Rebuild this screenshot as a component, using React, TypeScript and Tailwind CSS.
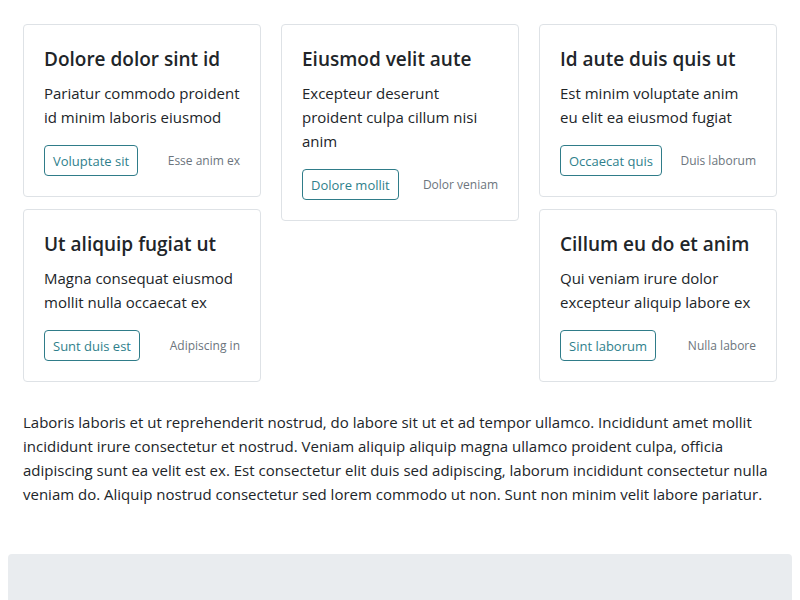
const cards = {
  left: [
    {
      title: 'Dolore dolor sint id',
      body: ['Pariatur commodo proident', 'id minim laboris eiusmod'],
      action: 'Voluptate sit',
      note: 'Esse anim ex',
    },
    {
      title: 'Ut aliquip fugiat ut',
      body: ['Magna consequat eiusmod', 'mollit nulla occaecat ex'],
      action: 'Sunt duis est',
      note: 'Adipiscing in',
    },
  ],
  middle: [
    {
      title: 'Eiusmod velit aute',
      body: ['Excepteur deserunt', 'proident culpa cillum nisi', 'anim'],
      action: 'Dolore mollit',
      note: 'Dolor veniam',
    },
  ],
  right: [
    {
      title: 'Id aute duis quis ut',
      body: ['Est minim voluptate anim', 'eu elit ea eiusmod fugiat'],
      action: 'Occaecat quis',
      note: 'Duis laborum',
    },
    {
      title: 'Cillum eu do et anim',
      body: ['Qui veniam irure dolor', 'excepteur aliquip labore ex'],
      action: 'Sint laborum',
      note: 'Nulla labore',
    },
  ],
};

const paragraph = [
  'Laboris laboris et ut reprehenderit nostrud, do labore sit ut et ad tempor ullamco. Incididunt amet mollit',
  'incididunt irure consectetur et nostrud. Veniam aliquip aliquip magna ullamco proident culpa, officia',
  'adipiscing sunt ea velit est ex. Est consectetur elit duis sed adipiscing, laborum incididunt consectetur nulla',
  'veniam do. Aliquip nostrud consectetur sed lorem commodo ut non. Sunt non minim velit labore pariatur.',
];

type Card = { title: string; body: string[]; action: string; note: string };

function InfoCard({ card }: { card: Card }) {
  return (
    <div className="mb-3 rounded-[4px] border border-[#dee2e6] bg-white p-5">
      <h5 className="mb-2 whitespace-nowrap text-[19px] font-semibold leading-7 text-[#212529]">{card.title}</h5>
      <p className="mb-4 text-[15px] leading-6 text-[#212529]">
        {card.body.map((line) => (
          <span key={line} className="block whitespace-nowrap">
            {line}
          </span>
        ))}
      </p>
      <div className="flex items-center justify-between">
        <button className="h-[31px] rounded-[4px] border border-[#2f7c89] px-2 text-[13px] leading-5 text-[#2f7f8c]">
          {card.action}
        </button>
        <span className="text-[12px] text-[#6c757d]">{card.note}</span>
      </div>
    </div>
  );
}

export default function App() {
  return (
    <div className="min-h-[600px] bg-white px-2 pt-6 font-['Segoe_UI','Open_Sans',sans-serif] text-[#212529]">
      <div className="px-[15px]">
        <div className="flex items-start gap-5">
          <div className="w-[238px]">
            {cards.left.map((c) => (
              <InfoCard key={c.title} card={c} />
            ))}
          </div>
          <div className="w-[238px]">
            {cards.middle.map((c) => (
              <InfoCard key={c.title} card={c} />
            ))}
          </div>
          <div className="w-[238px]">
            {cards.right.map((c) => (
              <InfoCard key={c.title} card={c} />
            ))}
          </div>
        </div>
        <p className="mt-4 text-[15px] leading-6">
          {paragraph.map((line) => (
            <span key={line} className="block whitespace-nowrap">
              {line}
            </span>
          ))}
        </p>
      </div>
      <div className="mt-12 h-[60px] rounded-t-[4px] bg-[#e9ecef]" />
    </div>
  );
}
